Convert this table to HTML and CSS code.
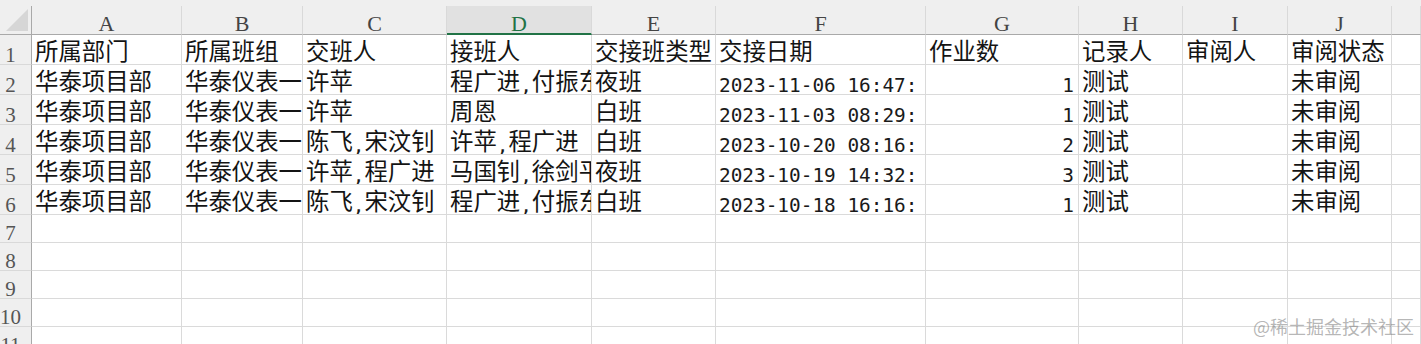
FILE: index.html
```html
<!DOCTYPE html>
<html lang="zh-CN">
<head>
<meta charset="utf-8">
<title>交接班记录</title>
<link rel="stylesheet" href="styles.css">
</head>
<body>
<div class="sheet">
  <div class="strip"></div>

  <div class="corner"><svg class="tri" width="22" height="22" viewBox="0 0 22 22"><polygon points="22,0 22,22 0,22" fill="#d6d6d6"/></svg></div>
  <div class="h">A</div><div class="h">B</div><div class="h">C</div><div class="h sel">D</div><div class="h">E</div><div class="h">F</div><div class="h">G</div><div class="h">H</div><div class="h">I</div><div class="h">J</div><div class="h"></div>

  <div class="rn">1</div>
  <div class="c">所属部门</div><div class="c">所属班组</div><div class="c">交班人</div><div class="c">接班人</div><div class="c">交接班类型</div><div class="c">交接日期</div><div class="c">作业数</div><div class="c">记录人</div><div class="c">审阅人</div><div class="c">审阅状态</div><div class="c"></div>

  <div class="rn">2</div>
  <div class="c">华泰项目部</div><div class="c">华泰仪表一班</div><div class="c">许苹</div><div class="c">程广进<span class="m">,</span>付振东</div><div class="c">夜班</div><div class="c"><span class="m">2023-11-06 16:47:</span></div><div class="c r"><span class="m">1</span></div><div class="c">测试</div><div class="c"></div><div class="c">未审阅</div><div class="c"></div>

  <div class="rn">3</div>
  <div class="c">华泰项目部</div><div class="c">华泰仪表一班</div><div class="c">许苹</div><div class="c">周恩</div><div class="c">白班</div><div class="c"><span class="m">2023-11-03 08:29:</span></div><div class="c r"><span class="m">1</span></div><div class="c">测试</div><div class="c"></div><div class="c">未审阅</div><div class="c"></div>

  <div class="rn">4</div>
  <div class="c">华泰项目部</div><div class="c">华泰仪表一班</div><div class="c">陈飞<span class="m">,</span>宋汶钊</div><div class="c">许苹<span class="m">,</span>程广进</div><div class="c">白班</div><div class="c"><span class="m">2023-10-20 08:16:</span></div><div class="c r"><span class="m">2</span></div><div class="c">测试</div><div class="c"></div><div class="c">未审阅</div><div class="c"></div>

  <div class="rn">5</div>
  <div class="c">华泰项目部</div><div class="c">华泰仪表一班</div><div class="c">许苹<span class="m">,</span>程广进</div><div class="c">马国钊<span class="m">,</span>徐剑平</div><div class="c">夜班</div><div class="c"><span class="m">2023-10-19 14:32:</span></div><div class="c r"><span class="m">3</span></div><div class="c">测试</div><div class="c"></div><div class="c">未审阅</div><div class="c"></div>

  <div class="rn">6</div>
  <div class="c">华泰项目部</div><div class="c">华泰仪表一班</div><div class="c">陈飞<span class="m">,</span>宋汶钊</div><div class="c">程广进<span class="m">,</span>付振东</div><div class="c">白班</div><div class="c"><span class="m">2023-10-18 16:16:</span></div><div class="c r"><span class="m">1</span></div><div class="c">测试</div><div class="c"></div><div class="c">未审阅</div><div class="c"></div>

  <div class="rn">7</div>
  <div class="c"></div><div class="c"></div><div class="c"></div><div class="c"></div><div class="c"></div><div class="c"></div><div class="c"></div><div class="c"></div><div class="c"></div><div class="c"></div><div class="c"></div>

  <div class="rn">8</div>
  <div class="c"></div><div class="c"></div><div class="c"></div><div class="c"></div><div class="c"></div><div class="c"></div><div class="c"></div><div class="c"></div><div class="c"></div><div class="c"></div><div class="c"></div>

  <div class="rn">9</div>
  <div class="c"></div><div class="c"></div><div class="c"></div><div class="c"></div><div class="c"></div><div class="c"></div><div class="c"></div><div class="c"></div><div class="c"></div><div class="c"></div><div class="c"></div>

  <div class="rn">10</div>
  <div class="c"></div><div class="c"></div><div class="c"></div><div class="c"></div><div class="c"></div><div class="c"></div><div class="c"></div><div class="c"></div><div class="c"></div><div class="c"></div><div class="c"></div>

  <div class="rn">11</div>
  <div class="c"></div><div class="c"></div><div class="c"></div><div class="c"></div><div class="c"></div><div class="c"></div><div class="c"></div><div class="c"></div><div class="c"></div><div class="c"></div><div class="c"></div>
</div>
<div class="watermark">@稀土掘金技术社区</div>
</body>
</html>
```
FILE: styles.css
```css
html, body {
  margin: 0;
  padding: 0;
  background: #ffffff;
  overflow: hidden;
  width: 1421px;
  height: 344px;
}

body {
  position: relative;
  font-family: "Noto Sans CJK SC", sans-serif;
}

.sheet {
  display: grid;
  grid-template-columns: 32px 150px 121px 144px 145px 124px 210px 153px 104px 105px 104px 1fr;
  grid-template-rows: 6px 29px repeat(6, 30px) repeat(5, 28px);
  width: 1421px;
  height: 344px;
  overflow: hidden;
}

.strip {
  grid-column: 1 / -1;
  background: #efefef;
}

.corner {
  background: #efefef;
  border-right: 1px solid #a9a9a9;
  border-bottom: 1px solid #a9a9a9;
  display: flex;
  align-items: flex-end;
  justify-content: flex-end;
  padding: 0 3px 3px 0;
}

.tri {
  display: block;
}

.h {
  background: #efefef;
  border-right: 1px solid #d9d9d9;
  border-bottom: 1px solid #a9a9a9;
  text-align: center;
  font-family: "Liberation Serif", serif;
  font-size: 22px;
  line-height: 36px;
  color: #444444;
  overflow: hidden;
  white-space: nowrap;
}

.h.sel {
  background: #e1e1e1;
  color: #217346;
  border-bottom: 2px solid #217346;
}

.rn {
  background: #efefef;
  border-right: 1px solid #a9a9a9;
  border-bottom: 1px solid #d9d9d9;
  display: flex;
  align-items: flex-end;
  justify-content: center;
  padding-right: 10px;
  font-family: "Liberation Serif", serif;
  font-size: 21px;
  line-height: 18px;
  color: #555555;
  white-space: nowrap;
}

.c {
  border-right: 1px solid #dadada;
  border-bottom: 1px solid #dadada;
  overflow: hidden;
  white-space: nowrap;
  padding: 1px 3px 0 3px;
  font-family: "Noto Sans CJK SC", sans-serif;
  font-size: 23.4px;
  line-height: 28px;
  color: #141414;
}

.c.r {
  text-align: right;
  padding-right: 4px;
}

.m {
  font-family: "DejaVu Sans Mono", "Liberation Mono", monospace;
  font-size: 19.4px;
  line-height: 1;
  vertical-align: -2px;
  color: #1a1a1a;
}

.watermark {
  position: absolute;
  right: 7px;
  bottom: 9px;
  font-family: "Noto Sans CJK SC", sans-serif;
  font-size: 18px;
  line-height: 18px;
  color: rgba(120, 120, 120, 0.55);
  white-space: nowrap;
}
```
